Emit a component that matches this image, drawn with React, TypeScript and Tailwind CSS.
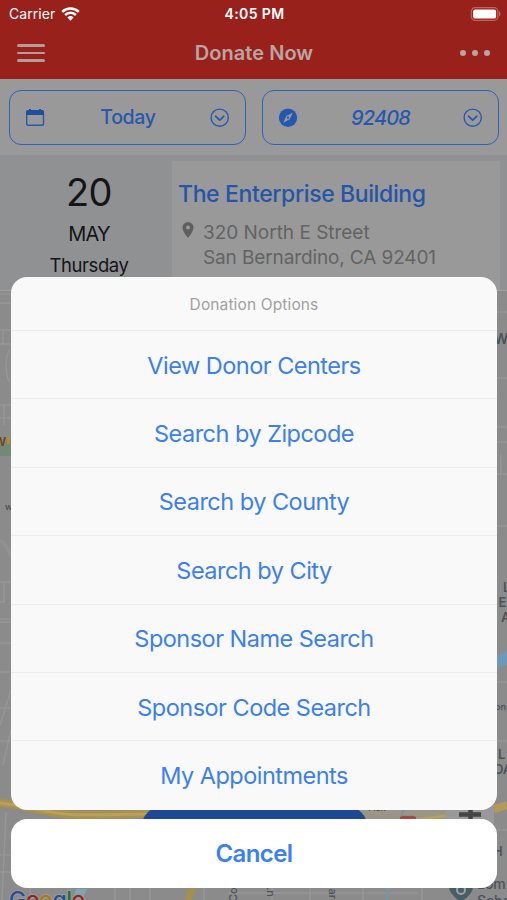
import type { ReactNode } from "react";

const options = [
  "View Donor Centers",
  "Search by Zipcode",
  "Search by County",
  "Search by City",
  "Sponsor Name Search",
  "Sponsor Code Search",
  "My Appointments",
];

function StatusBar() {
  return (
    <div className="flex h-[27px] items-center justify-between pl-[9px] pr-[6px] text-white">
      <div className="flex w-[100px] items-center gap-[6px]">
        <span className="text-[14px] tracking-[0.05px]">Carrier</span>
        <svg width="19" height="14" viewBox="0 0 19 14" fill="none" stroke="white" strokeWidth="2.5">
          <path d="M1.2 4.9a12 12 0 0 1 16.6 0" />
          <path d="M4.1 8a7.8 7.8 0 0 1 10.8 0" />
          <path d="M9.5 13.7 6.4 10.4a4.5 4.5 0 0 1 6.2 0Z" fill="white" stroke="none" />
        </svg>
      </div>
      <span className="pr-[1px] text-[14px] font-semibold tracking-[0.4px]">4:05 PM</span>
      <div className="flex w-[100px] justify-end">
        <svg width="31" height="14" viewBox="0 0 31 14">
          <rect x="1.3" y="0.7" width="26.6" height="12.6" rx="3.8" fill="none" stroke="#c0655f" strokeWidth="1.2" />
          <rect x="3.1" y="2.4" width="23" height="9.2" rx="2.2" fill="white" />
          <path d="M29 4.600c2 .5 2 4.300 0 4.800Z" fill="#c0655f" />
        </svg>
      </div>
    </div>
  );
}

function NavBar() {
  return (
    <div className="flex h-[52px] items-center justify-between pl-[17px] pr-[17px] text-[#b9a5a0]">
      <div className="flex w-[28px] flex-col gap-[5px]">
        <div className="h-[2.500px] rounded bg-[#b59c98]" />
        <div className="h-[2.500px] rounded bg-[#b59c98]" />
        <div className="h-[2.500px] rounded bg-[#b59c98]" />
      </div>
      <h1 className="pl-[3px] text-[20px] font-semibold tracking-[0.05px]">Donate Now</h1>
      <div className="flex w-[30px] justify-between">
        <div className="size-[6px] rounded-full bg-[#b9a5a0]" />
        <div className="size-[6px] rounded-full bg-[#b9a5a0]" />
        <div className="size-[6px] rounded-full bg-[#b9a5a0]" />
      </div>
    </div>
  );
}

function FilterButton({ icon, children }: { icon: ReactNode; children: ReactNode }) {
  return (
    <button className="flex h-[55px] w-[237px] items-center justify-between rounded-[12px] border-[1.5px] border-[#2f62ba] px-[15px] text-[20px] font-medium text-[#2858ad]">
      {icon}
      {children}
      <svg width="20" height="20" viewBox="0 0 20 20" fill="none" stroke="#2858ad" strokeLinecap="round" strokeLinejoin="round">
        <circle cx="9.7" cy="9.7" r="8.6" strokeWidth="1.4" />
        <path d="m5.700 8.300 4 3.800 4-3.800" strokeWidth="1.8" />
      </svg>
    </button>
  );
}

function CalendarIcon() {
  return (
    <svg width="20" height="20" viewBox="0 0 20 20" fill="none">
      <rect x="1.7" y="3" width="16.800" height="14.2" rx="1.8" stroke="#2858ad" strokeWidth="1.4" />
      <path d="M1 7V4q0-2 2-2h1V1h2v1h8V1h2v1h1q2 0 2 2v3Z" fill="#1f4d9f" />
    </svg>
  );
}

function CompassIcon() {
  return (
    <svg width="20" height="20" viewBox="0 0 20 20">
      <circle cx="10" cy="9.700" r="9.2" fill="#2458b0" />
      <path d="m14.800 4.700-3.100 6.600L5.200 14.700l3.100-6.700Z" fill="#999" />
      <circle cx="10" cy="9.700" r="1.1" fill="#2458b0" />
    </svg>
  );
}

function MapCanvas() {
  return (
    <svg className="block" width="507" height="609" viewBox="0 291 507 609">
      <rect y="291" width="507" height="609" fill="#8b8b8c" />
      <g fill="none" stroke="#979798" strokeWidth="1.4">
        <path d="M0 294h14M0 303h12M0 330h12M3 330v14h9M0 344h12M9 350q-6 15 0 32M0 405h12M4 405v20M0 418h12M0 582h12M4 582v20h-4M0 619h12M0 622h12M0 643h12M0 672h12M11 690 0 725M0 708h12M0 741h12M11 730 3 765" />
        <path d="M495 312h12M495 378h12M495 427h12M495 442h12M495 474h12M501 455v18M495 526h12M495 682h12M495 741h12M495 830h12" />
        <path d="M6 812 2 900M0 855h14M0 872h14M30 885v15M115 885v15M130 885v15M150 885v15M204 885v15M228 893h190M272 885v15M310 885v15M363 885v15M422 885v15" />
        <path d="M0 540q8 6 12 18" strokeWidth="4" opacity=".5" />
      </g>
      <rect y="439" width="12" height="17" fill="#728a75" />
      <path d="M495 656 507 652v13l-12 3Z" fill="#6b9ab7" />
      <path d="M0 803c28 2 50 12 80 12s50-1 76-1" fill="none" stroke="#aa914c" strokeWidth="8" />
      <path d="M0 803c28 2 50 12 80 12s50-1 76-1" fill="none" stroke="#b8a15d" strokeWidth="3" />
      <path d="M355 808h91v13h-91Z" fill="#999587" />
      <path d="M410 821q20-3 36-5" fill="none" stroke="#b7a05b" strokeWidth="3" />
      <path d="M494 809q8-2 13-4" fill="none" stroke="#b39b57" strokeWidth="8" />
      <path d="M188 900 193 886" stroke="#a68f4d" strokeWidth="7" />
      <path d="M76 889h11l-5 10-9 1Z" fill="#7ea7b3" />
      <path d="m388 885-1 15" stroke="#7795a7" strokeWidth="3" />
      <path d="m401 817 3-8" stroke="#6996ae" strokeWidth="2" />
      <path d="M400 823v-6q3-2 8-1 5-1 8 1v6Z" fill="#a34b43" />
      <rect x="446" y="800" width="48" height="24" fill="#999" />
      <path d="M459 814.500h22M470.500 807v14" stroke="#444" strokeWidth="4.5" />
      <rect x="141" y="805" width="227" height="52" rx="24" fill="#1d4994" />
      <g fontWeight="600" fill="#4d5358">
        <text x="-6" y="446" fontSize="12" fill="#79401c">W</text>
        <rect x="7" y="438" width="3" height="6" fill="#b58a31" />
        <text x="5" y="510" fontSize="9">w</text>
        <text x="494" y="344" fontSize="14">W</text>
        <text x="503" y="592" fontSize="13">L</text>
        <text x="498.500" y="607" fontSize="13">E</text>
        <text x="501" y="622" fontSize="13">A</text>
        <text x="495" y="710" fontSize="9">on</text>
        <text x="498" y="759" fontSize="13">L</text>
        <text x="494" y="774" fontSize="13">DA</text>
        <text x="493" y="856" fontSize="13">H</text>
        <text x="477" y="889" fontSize="14" fontWeight="500">Lom</text>
        <text x="477" y="906" fontSize="14" fontWeight="500">Scho</text>
        <text x="368" y="811" fontSize="9">Fisk</text>
        <text transform="translate(237 902) rotate(-90)" fontSize="11" fontWeight="500">Cos</text>
        <text transform="translate(267 884) rotate(90)" fontSize="11" fontWeight="500">Ln</text>
        <text transform="translate(329 882) rotate(90)" fontSize="11" fontWeight="500">nar</text>
      </g>
      <path d="M449 887q0-8 12-8t12 8q0 7-12 15-12-8-12-15Z" fill="#485e66" />
      <circle cx="461" cy="890" r="4" fill="none" stroke="#9ba2a4" strokeWidth="2" />
      <text x="9" y="908" fontSize="23" fontWeight="500" letterSpacing="-.5" stroke="#999" strokeWidth="2" paintOrder="stroke">
        <tspan fill="#254f93">G</tspan><tspan fill="#93261f">o</tspan><tspan fill="#a87b13">o</tspan><tspan fill="#254f93">g</tspan><tspan fill="#236f36">l</tspan><tspan fill="#93261f">e</tspan>
      </text>
    </svg>
  );
}

export default function App() {
  return (
    <main className="relative h-[900px] w-[507px] overflow-hidden bg-[#999] font-['Inter','Liberation_Sans',sans-serif]">
      <header className="h-[79px] bg-[#99211b]">
        <StatusBar />
        <NavBar />
      </header>

      <section className="flex h-[77px] items-start justify-between border-b border-[#909193] pl-[9px] pr-[8px] pt-[11px]">
        <FilterButton icon={<CalendarIcon />}>
          <span className="pl-[1px] pt-[1px] text-[19.500px] tracking-[-0.3px]">Today</span>
        </FilterButton>
        <FilterButton icon={<CompassIcon />}>
          <span className="italic tracking-[-0.8px]">92408</span>
        </FilterButton>
      </section>

      <section className="flex h-[135px] border-b border-[#a0a0a0] bg-[#8f9193] pr-[7px] pt-[5px]">
        <div className="flex w-[172px] flex-col items-center pl-[6px] text-[#141516]">
          <span className="mt-[11px] text-[38px] leading-[40px] tracking-[-0.6px]">20</span>
          <span className="mt-[10px] text-[20px] leading-[24px] tracking-[-0.8px]">MAY</span>
          <span className="mt-[8px] text-[18.500px] leading-[22px] tracking-[-0.4px]">Thursday</span>
        </div>
        <div className="flex-1 bg-[#999] pl-[6px] pt-[17px]">
          <h2 className="whitespace-nowrap text-[23px] font-medium leading-[32px] tracking-[-0.38px] text-[#2555aa]">The Enterprise Building</h2>
          <div className="mt-[11px] flex gap-[9px] pl-[4px]">
            <svg className="mt-px" width="12" height="16" viewBox="0 0 12 16">
              <path fillRule="evenodd" d="M6 0a5.600 5.600 0 0 0-5.600 5.600C.4 9.500 6 16 6 16s5.600-6.500 5.600-10.400A5.600 5.600 0 0 0 6 0Zm0 3.600a2 2 0 1 1 0 4 2 2 0 0 1 0-4Z" fill="#5f5f60" />
            </svg>
            <p className="whitespace-nowrap text-[19px] leading-[24.500px] text-[#636364]">
              <span className="tracking-[-0.02px]">320 North E Street</span>
              <br />
              <span className="tracking-[-0.12px]">San Bernardino, CA 92401</span>
            </p>
          </div>
        </div>
      </section>

      <MapCanvas />

      <div role="dialog" className="absolute inset-x-[11px] bottom-[12px] flex w-[486px] flex-col gap-[9px]">
        <div className="h-[533px] overflow-hidden rounded-[16px] bg-[#f9f9f9]">
          <div className="flex h-[53px] items-center justify-center pt-[2px] text-[15.500px] text-[#a0a0a0]">
            <span className="tracking-[0.13px]">Donation Options</span>
          </div>
          {options.map((option) => (
            <button
              key={option}
              className="flex h-[68.400px] w-full items-center justify-center border-t border-[#ececec] pt-[1px] text-[23.500px] tracking-[-0.52px] text-[#3b7ff0]"
            >
              {option}
            </button>
          ))}
        </div>
        <button className="flex h-[69px] items-center justify-center rounded-[16px] bg-white text-[24px] font-semibold tracking-[-0.6px] text-[#3b7ff0]">
          Cancel
        </button>
      </div>
    </main>
  );
}
